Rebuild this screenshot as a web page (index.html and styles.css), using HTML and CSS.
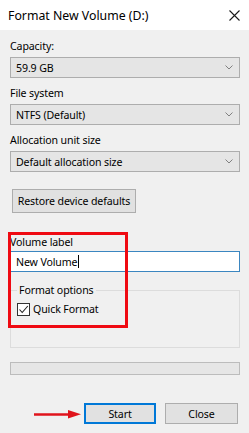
FILE: index.html
```html
<!DOCTYPE html>
<html>
<head>
<meta charset="utf-8">
<title>Format New Volume (D:)</title>
<link rel="stylesheet" href="styles.css">
</head>
<body>
<div class="window">
  <div class="titlebar">
    <span class="title">Format New Volume (D:)</span>
    <svg class="close-x" width="11" height="11" viewBox="0 0 11 11"><path d="M0.5 0.5L10.5 10.5M10.5 0.5L0.5 10.5" stroke="#1a1a1a" stroke-width="1.1" fill="none"/></svg>
  </div>
  <div class="content">
    <div class="field first">
      <div class="label">Capacity:</div>
      <div class="combo"><span>59.9 GB</span><svg class="chev" width="8" height="5" viewBox="0 0 8 5"><path d="M0.5 0.5L4 4L7.5 0.5" stroke="#808080" stroke-width="1" fill="none"/></svg></div>
    </div>
    <div class="field">
      <div class="label">File system</div>
      <div class="combo"><span>NTFS (Default)</span><svg class="chev" width="8" height="5" viewBox="0 0 8 5"><path d="M0.5 0.5L4 4L7.5 0.5" stroke="#808080" stroke-width="1" fill="none"/></svg></div>
    </div>
    <div class="field">
      <div class="label">Allocation unit size</div>
      <div class="combo"><span>Default allocation size</span><svg class="chev" width="8" height="5" viewBox="0 0 8 5"><path d="M0.5 0.5L4 4L7.5 0.5" stroke="#808080" stroke-width="1" fill="none"/></svg></div>
    </div>
    <button class="btn restore">Restore device defaults</button>
    <div class="field volume">
      <div class="label">Volume label</div>
      <div class="textbox"><span>New Volume</span><span class="caret"></span></div>
    </div>
    <fieldset class="group">
      <legend>Format options</legend>
      <div class="check">
        <span class="box"><svg width="11" height="11" viewBox="0 0 11 11"><path d="M1.5 5.5L4.2 8.5L9.8 2" stroke="#222" stroke-width="1.1" fill="none"/></svg></span>
        <span>Quick Format</span>
      </div>
    </fieldset>
    <div class="progress"></div>
    <div class="actions">
      <svg class="arrow" width="48" height="10" viewBox="0 0 48 10"><path d="M0 5.5H36" stroke="#e0141c" stroke-width="2.6"/><path d="M34 1L47 5.3L34 9.5Z" fill="#e0141c"/></svg>
      <button class="btn start">Start</button>
      <button class="btn closebtn">Close</button>
    </div>
  </div>
  <div class="highlight"></div>
</div>
</body>
</html>
```
FILE: styles.css
```css
html, body {
  margin: 0;
  padding: 0;
}
body {
  width: 249px;
  height: 433px;
  overflow: hidden;
  background: #f0f0f0;
  font-family: "Noto Sans", "Open Sans", sans-serif;
  font-size: 10.6px;
  letter-spacing: -0.12px;
  color: #000;
}
.window {
  position: relative;
  width: 249px;
  height: 433px;
  background: #f0f0f0;
}
.titlebar {
  height: 30px;
  background: #fff;
  display: flex;
  align-items: center;
  justify-content: space-between;
  padding: 0 9px 0 8px;
  box-sizing: border-box;
  font-size: 12.3px;
  letter-spacing: 0;
}
.close-x {
  display: block;
}
.content {
  padding: 8px 9px 0 10px;
}
.field {
  margin-top: 7px;
}
.field.first {
  margin-top: 0;
}
.label {
  line-height: 16px;
}
.combo {
  margin-top: 3px;
  height: 21px;
  box-sizing: border-box;
  border: 1px solid #adadad;
  background: #e5e5e5;
  display: flex;
  align-items: center;
  justify-content: space-between;
  padding: 0 6px 0 5px;
}
.chev {
  display: block;
}
.btn {
  font-family: inherit;
  font-size: inherit;
  letter-spacing: inherit;
  color: #000;
  background: #e1e1e1;
  border: 1px solid #adadad;
  box-sizing: border-box;
  padding: 0;
  margin: 0;
  white-space: nowrap;
}
.restore {
  display: block;
  margin: 17px 0 0 2px;
  width: 124px;
  height: 24px;
}
.volume {
  margin-top: 21px;
}
.textbox {
  margin-top: 1px;
  height: 21px;
  box-sizing: border-box;
  border: 1px solid #3b86c0;
  background: #fff;
  display: flex;
  align-items: center;
  padding-left: 5px;
}
.caret {
  width: 1px;
  height: 13px;
  background: #000;
  margin-left: 1px;
}
.group {
  margin: 10px 0 0 0;
  padding: 3px 6px 30px 6px;
  border: 1px solid #dcdcdc;
  min-width: 0;
}
.group legend {
  padding: 0 2px;
  line-height: 16px;
}
.check {
  display: flex;
  align-items: center;
  height: 16px;
}
.box {
  width: 13px;
  height: 13px;
  box-sizing: border-box;
  border: 1px solid #333;
  background: #fff;
  display: flex;
  align-items: center;
  justify-content: center;
  margin-right: 3px;
}
.box svg {
  display: block;
}
.progress {
  margin-top: 14px;
  height: 13px;
  box-sizing: border-box;
  border: 1px solid #bcbcbc;
  background: #e6e6e6;
}
.actions {
  margin-top: 28px;
  display: flex;
  justify-content: flex-end;
  align-items: center;
  padding-right: 2px;
}
.arrow {
  display: block;
  margin-right: 2px;
}
.start {
  width: 72px;
  height: 21px;
  border: 2px solid #0078d7;
  margin-right: 9px;
}
.closebtn {
  width: 73px;
  height: 21px;
}
.highlight {
  position: absolute;
  left: 8px;
  top: 232px;
  width: 120px;
  height: 96px;
  box-sizing: border-box;
  border: 3.5px solid #ef0a12;
  pointer-events: none;
}
```
